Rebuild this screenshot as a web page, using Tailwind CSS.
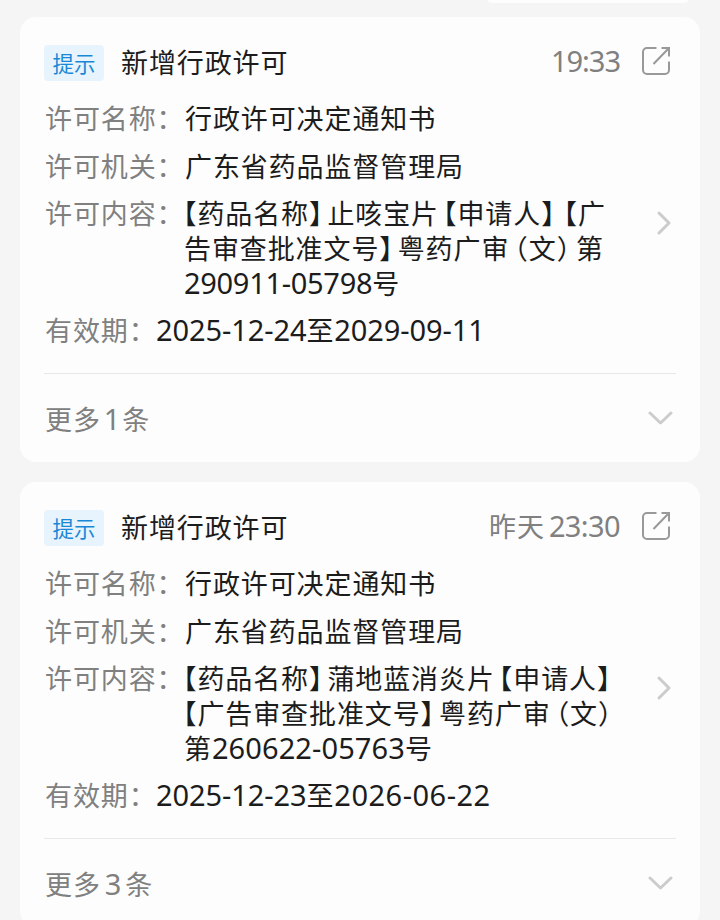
<!DOCTYPE html>
<html lang="zh-CN">
<head>
    <meta charset="UTF-8">
    <meta name="viewport" content="width=device-width, initial-scale=1.0">
    <script src="https://cdn.jsdelivr.net/npm/@tailwindcss/browser@4"></script>
    <title>行政许可</title>
</head>
<body class="h-[920px] overflow-hidden whitespace-nowrap bg-[#f5f5f5] font-['Noto_Sans_CJK_SC',sans-serif] text-[27px] leading-[35px] tracking-[0.9px] text-[#1c1c1c]">

    <!-- end of the bar above the list -->
    <div class="ml-[488px] w-[200px] h-[3px] rounded-b-[16px] bg-[#fdfdfd]"></div>

    <!-- card list -->
    <div class="flex flex-col gap-5 px-5 pt-[14px]">

        <!-- card 1 -->
        <div class="h-[445px] shrink-0 rounded-[16px] bg-[#fdfdfd] px-6 pt-7">
            <!-- header -->
            <div class="flex items-center h-9">
                <span class="w-[60px] h-9 rounded-[4px] bg-[#e8f4fd] text-center text-[21.5px] leading-[36px] tracking-normal text-[#1888d6]">提示</span>
                <h2 class="ml-[17px] -mt-1">新增行政许可</h2>
                <span class="ml-auto mr-[21px] -mt-[5px] font-['Noto_Sans'] text-[29px] tracking-[-1px] text-[#808080]">19:33</span>
                <svg class="w-[30px] h-[30px] mr-[5px] -mt-1" viewBox="0 0 30 30" fill="none" stroke="#999" stroke-width="2">
                    <path d="M15.5 2H6a4 4 0 0 0-4 4v18a4 4 0 0 0 4 4h18a4 4 0 0 0 4-4v-8.500M20.500 2H28v8.500M28 2L12.500 18"/>
                </svg>
            </div>

            <!-- details -->
            <div class="mt-[19px] flex items-start">
                <div class="flex flex-col gap-[13px]">
                    <div class="flex"><span class="w-[140px] pl-px text-[#808080]">许可名称：</span><span class="pl-px">行政许可决定通知书</span></div>
                    <div class="flex"><span class="w-[140px] pl-px text-[#808080]">许可机关：</span><span class="pl-px">广东省药品监督管理局</span></div>
                    <div class="flex -mt-px">
                        <span class="w-[140px] pl-px shrink-0 text-[#808080]">许可内容：</span>
                        <p class="[font-feature-settings:'halt']"><span class="-ml-px">【</span>药品名称<span class="mr-1">】</span>止咳宝片<span class="ml-1">【</span>申请人<span class="mr-1">】</span><span class="ml-1">【</span>广<br>告审查批准文号<span class="mr-1">】</span>粤药广审<span class="ml-[5px]">（</span>文<span class="mr-[5px]">）</span>第<br><span class="font-['Noto_Sans'] text-[29px] leading-none tracking-[-0.3px]">290911-05798</span>号</p>
                    </div>
                    <div class="flex -mt-px"><span class="w-[112px] pl-px text-[#808080]">有效期：</span><span class="font-['Noto_Sans'] text-[29px] tracking-[-0.1px]">2025-12-24<span class="font-['Noto_Sans_CJK_SC'] text-[27px] leading-none tracking-[0.9px]">至</span>2029-09-11</span></div>
                </div>
                <svg class="ml-auto mr-1 mt-[109px] w-[16px] h-[28px]" viewBox="0 0 16 28" fill="none" stroke="#ccc" stroke-width="3" stroke-linecap="round" stroke-linejoin="round">
                    <path d="M3 4l10 10L3 24"/>
                </svg>
            </div>

            <!-- more -->
            <div class="mt-[26px] flex h-[90px] items-center justify-between border-t border-[#e8e8e8] text-[#808080]">
                <span class="pl-px">更多<span class="font-['Noto_Sans'] ml-[3px] mr-px text-[29px] leading-none">1</span>条</span>
                <svg class="mr-[3px] w-[26px] h-[16px]" viewBox="0 0 26 16" fill="none" stroke="#ccc" stroke-width="3" stroke-linecap="round" stroke-linejoin="round">
                    <path d="M3 2l10.500 10L24 2"/>
                </svg>
            </div>
        </div>

        <!-- card 2 -->
        <div class="h-[445px] shrink-0 rounded-[16px] bg-[#fdfdfd] px-6 pt-7">
            <!-- header -->
            <div class="flex items-center h-9">
                <span class="w-[60px] h-9 rounded-[4px] bg-[#e8f4fd] text-center text-[21.5px] leading-[36px] tracking-normal text-[#1888d6]">提示</span>
                <h2 class="ml-[17px] -mt-1">新增行政许可</h2>
                <span class="ml-auto mr-[21px] -mt-[5px] text-[#808080]">昨天<span class="ml-1 font-['Noto_Sans'] text-[29px] leading-none tracking-[-0.6px]">23:30</span></span>
                <svg class="w-[30px] h-[30px] mr-[5px] -mt-1" viewBox="0 0 30 30" fill="none" stroke="#999" stroke-width="2">
                    <path d="M15.5 2H6a4 4 0 0 0-4 4v18a4 4 0 0 0 4 4h18a4 4 0 0 0 4-4v-8.500M20.500 2H28v8.500M28 2L12.500 18"/>
                </svg>
            </div>

            <!-- details -->
            <div class="mt-[19px] flex items-start">
                <div class="flex flex-col gap-[13px]">
                    <div class="flex"><span class="w-[140px] pl-px text-[#808080]">许可名称：</span><span class="pl-px">行政许可决定通知书</span></div>
                    <div class="flex"><span class="w-[140px] pl-px text-[#808080]">许可机关：</span><span class="pl-px">广东省药品监督管理局</span></div>
                    <div class="flex -mt-px">
                        <span class="w-[140px] pl-px shrink-0 text-[#808080]">许可内容：</span>
                        <p class="[font-feature-settings:'halt']"><span class="-ml-px">【</span>药品名称<span class="mr-1">】</span>蒲地蓝消炎片<span class="ml-1">【</span>申请人】<br><span class="-ml-px">【</span>广告审查批准文号<span class="mr-1">】</span>粤药广审<span class="ml-[5px]">（</span>文）<br>第<span class="font-['Noto_Sans'] text-[29px] leading-none tracking-[0.1px]">260622-05763</span>号</p>
                    </div>
                    <div class="flex -mt-px"><span class="w-[112px] pl-px text-[#808080]">有效期：</span><span class="font-['Noto_Sans'] text-[29px] tracking-[-0.1px]">2025-12-23<span class="font-['Noto_Sans_CJK_SC'] text-[27px] leading-none tracking-[0.9px]">至</span><span class="tracking-[0.5px]">2026-06-22</span></span></div>
                </div>
                <svg class="ml-auto mr-1 mt-[109px] w-[16px] h-[28px]" viewBox="0 0 16 28" fill="none" stroke="#ccc" stroke-width="3" stroke-linecap="round" stroke-linejoin="round">
                    <path d="M3 4l10 10L3 24"/>
                </svg>
            </div>

            <!-- more -->
            <div class="mt-[26px] flex h-[90px] items-center justify-between border-t border-[#e8e8e8] text-[#808080]">
                <span class="pl-px">更多<span class="font-['Noto_Sans'] ml-1 mr-[3px] text-[29px] leading-none">3</span>条</span>
                <svg class="mr-[3px] w-[26px] h-[16px]" viewBox="0 0 26 16" fill="none" stroke="#ccc" stroke-width="3" stroke-linecap="round" stroke-linejoin="round">
                    <path d="M3 2l10.500 10L24 2"/>
                </svg>
            </div>
        </div>
    </div>
</body>
</html>
